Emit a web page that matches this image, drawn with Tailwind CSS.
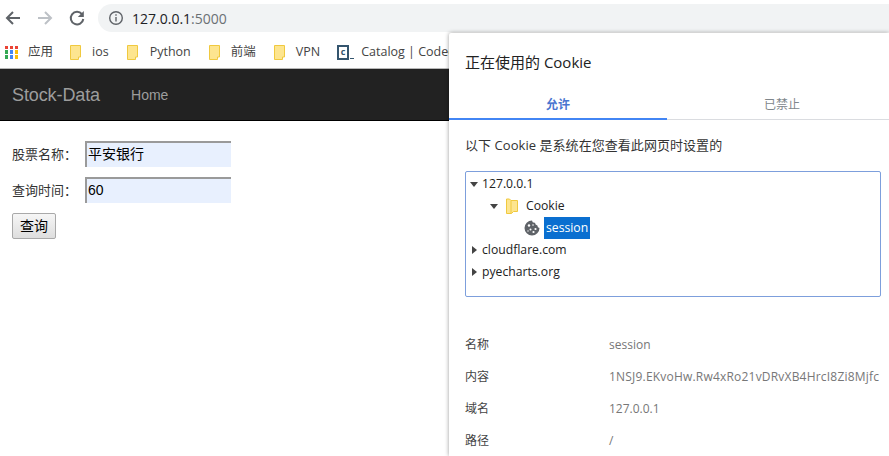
<!DOCTYPE html>
<html lang="zh">
<head>
    <meta charset="UTF-8">
    <title>Stock-Data</title>
    <script src="https://cdn.jsdelivr.net/npm/@tailwindcss/browser@4"></script>
</head>
<body class="bg-white w-[889px] h-[456px] overflow-hidden relative font-['Open_Sans','Noto_Sans_CJK_SC',sans-serif] text-[#333]">

    <!-- browser toolbar -->
    <div class="h-[36px] flex items-center pl-[3px]">
        <svg class="w-[18px] h-[18px] ml-[1px]" viewBox="0 0 18 18" fill="none" stroke="#5f6368" stroke-width="2"><path d="M16 9H3M9 3 3 9l6 6"/></svg>
        <svg class="w-[18px] h-[18px] ml-[14px]" viewBox="0 0 18 18" fill="none" stroke="#bdc1c6" stroke-width="2"><path d="M2 9h13M9 3l6 6-6 6"/></svg>
        <svg class="w-[18px] h-[18px] ml-[14px]" viewBox="0 0 18 18" fill="none" stroke="#5f6368" stroke-width="2"><path d="M14 5.2A6.3 6.3 0 1 0 15.3 10"/><path d="M15.8 2v6h-6" fill="#5f6368" stroke="none"/></svg>
        <div class="ml-[12px] flex-1 h-[28px] bg-[#f1f3f4] rounded-l-[14px] flex items-center pl-[10px]">
            <svg class="w-[16px] h-[16px]" viewBox="0 0 16 16" fill="none" stroke="#5f6368" stroke-width="1.4"><circle cx="8" cy="8" r="6.3"/><path d="M8 7v4.6M8 4.3v1.5"/></svg>
            <span class="ml-[8px] text-[14px] text-[#202124]">127.0.0.1<span class="text-[#6b7074]">:5000</span></span>
        </div>
    </div>

    <!-- bookmarks -->
    <div class="h-[33px] flex items-center pl-[5px] border-b border-[#b8b8b8] text-[12.5px] text-[#444] whitespace-nowrap">
        <div class="grid grid-cols-3 gap-[1.5px] w-[13px] h-[13px]">
            <i class="bg-[#ea4335]"></i><i class="bg-[#ea4335]"></i><i class="bg-[#ea4335]"></i>
            <i class="bg-[#34a853]"></i><i class="bg-[#4285f4]"></i><i class="bg-[#fbbc05]"></i>
            <i class="bg-[#34a853]"></i><i class="bg-[#4285f4]"></i><i class="bg-[#fbbc05]"></i>
        </div>
        <span class="ml-[10px]">应用</span>
        <svg class="w-[12px] h-[15px] ml-[17px]" viewBox="0 0 12 15"><path d="M.5.5h10v11.5h-2v2.5H.5z" fill="#fde58f" stroke="#f0c93f"/></svg>
        <span class="ml-[10px]">ios</span>
        <svg class="w-[12px] h-[15px] ml-[18px]" viewBox="0 0 12 15"><path d="M.5.5h10v11.5h-2v2.5H.5z" fill="#fde58f" stroke="#f0c93f"/></svg>
        <span class="ml-[11px]">Python</span>
        <svg class="w-[12px] h-[15px] ml-[18px]" viewBox="0 0 12 15"><path d="M.5.5h10v11.5h-2v2.5H.5z" fill="#fde58f" stroke="#f0c93f"/></svg>
        <span class="ml-[10px]">前端</span>
        <svg class="w-[12px] h-[15px] ml-[18px]" viewBox="0 0 12 15"><path d="M.5.5h10v11.5h-2v2.5H.5z" fill="#fde58f" stroke="#f0c93f"/></svg>
        <span class="ml-[10px]">VPN</span>
        <div class="ml-[17px] w-[12px] h-[15px] border-2 border-[#34556e] text-[9px] leading-[10px] text-center font-bold text-[#34556e]">c</div>
        <div class="w-[4px] h-[1px] bg-[#34556e] ml-[1px] mt-[12px]"></div>
        <span class="ml-[7px]">Catalog | Codecademy</span>
    </div>

    <!-- site navbar -->
    <div class="h-[52px] bg-[#222] border-b border-black flex items-center pl-[12px] pt-[2px] font-['Liberation_Sans',sans-serif] text-[#9d9d9d]">
        <span class="text-[18px] tracking-[-0.1px]">Stock-Data</span>
        <span class="ml-[31px] text-[14px]">Home</span>
    </div>

    <!-- query form -->
    <div class="pl-[12px] pt-[20px] text-[13px] font-['Liberation_Sans','Noto_Sans_CJK_SC',sans-serif]">
        <div class="flex items-center h-[26px]">
            <span class="w-[73px]">股票名称<span class="font-['Noto_Sans_CJK_TC']">：</span></span>
            <div class="w-[146px] h-[26px] bg-[#e8f0fe] border-2 border-r-0 border-b-0 border-[#9a9a9a] text-black text-[14px] leading-[22px] pl-[1px]">平安银行</div>
        </div>
        <div class="flex items-center h-[26px] mt-[10px]">
            <span class="w-[73px]">查询时间<span class="font-['Noto_Sans_CJK_TC']">：</span></span>
            <div class="w-[146px] h-[26px] bg-[#e8f0fe] border-2 border-r-0 border-b-0 border-[#9a9a9a] text-black text-[14px] leading-[22px] pl-[1px]">60</div>
        </div>
        <button class="mt-[10px] w-[44px] h-[26px] border border-[#a9a9a9] rounded-[2px] bg-gradient-to-b from-[#f6f6f6] to-[#dedede] text-[14px] text-black">查询</button>
    </div>

    <!-- cookie dialog -->
    <div class="absolute left-[449px] top-[33px] w-[440px] h-[423px] bg-white rounded-tl-[2px] shadow-[0_0_4px_rgba(0,0,0,0.4)] text-[#222]">
        <div class="pl-[16px] pt-[18px] text-[15px] leading-[22px]">正在使用的 Cookie</div>
        <div class="flex mt-[16px] h-[31px] text-[12px] border-b border-[#dadce0]">
            <div class="w-[218px] h-[31px] text-center leading-[31px] font-semibold text-[#4a76d0] border-b-2 border-[#4285f4]">允许</div>
            <div class="flex-1 pl-[8px] text-center leading-[31px] text-[#80868b]">已禁止</div>
        </div>
        <div class="pl-[16px] mt-[15px] text-[13px] tracking-[0.05px] leading-[20px] text-[#333]">以下 Cookie 是系统在您查看此网页时设置的</div>

        <div class="ml-[16px] mt-[16px] w-[416px] h-[126px] border border-[#7d9fdc] rounded-[2px] text-[12.2px] pt-[1px] text-[#222]">
            <div class="h-[22px] flex items-center pl-[4px]">
                <i class="border-x-[4px] border-x-transparent border-t-[5px] border-t-[#444]"></i>
                <span class="ml-[4px]">127.0.0.1</span>
            </div>
            <div class="h-[22px] flex items-center pl-[24px]">
                <i class="border-x-[4px] border-x-transparent border-t-[5px] border-t-[#444]"></i>
                <svg class="w-[12px] h-[16px] ml-[8px]" viewBox="0 0 12 16"><path d="M.5 1h3l1.5 1.5h6.5v11h-4l-2 2H.5z" fill="#fde58f" stroke="#f0c93f"/><path d="M5 2.5v13" stroke="#f0c93f" fill="none"/></svg>
                <span class="ml-[8px]">Cookie</span>
            </div>
            <div class="h-[22px] flex items-center pl-[58px]">
                <svg class="w-[16px] h-[16px]" viewBox="0 0 16 16"><path d="M8 .5a2.6 2.6 0 0 0 3 2.3 2.6 2.6 0 0 0 2.4 2.6A2.6 2.6 0 0 0 15.5 8 7.5 7.5 0 1 1 8 .5z" fill="#5f6368"/><g fill="#fff"><circle cx="5" cy="5.5" r="1.2"/><circle cx="9" cy="5" r=".8"/><circle cx="11.5" cy="9" r="1.1"/><circle cx="6.5" cy="9.5" r="1"/><circle cx="9.5" cy="12" r="1.1"/><circle cx="4" cy="11" r=".7"/></g></svg>
                <span class="ml-[4px] h-[22px] px-[2px] bg-[#0a6fd0] text-white leading-[22px]">session</span>
            </div>
            <div class="h-[22px] flex items-center pl-[6px]">
                <i class="border-y-[4px] border-y-transparent border-l-[5px] border-l-[#444]"></i>
                <span class="ml-[5px]">cloudflare.com</span>
            </div>
            <div class="h-[22px] flex items-center pl-[6px]">
                <i class="border-y-[4px] border-y-transparent border-l-[5px] border-l-[#444]"></i>
                <span class="ml-[5px]">pyecharts.org</span>
            </div>
        </div>

        <div class="mt-[32px] pl-[16px] text-[12px]">
            <div class="flex h-[32px] items-center"><span class="w-[144px] text-[#444]">名称</span><span class="text-[#777]">session</span></div>
            <div class="flex h-[32px] items-center"><span class="w-[144px] text-[#444]">内容</span><span class="text-[#777] tracking-[0.2px]">1NSJ9.EKvoHw.Rw4xRo21vDRvXB4HrcI8Zi8Mjfc</span></div>
            <div class="flex h-[32px] items-center"><span class="w-[144px] text-[#444]">域名</span><span class="text-[#777]">127.0.0.1</span></div>
            <div class="flex h-[32px] items-center"><span class="w-[144px] text-[#444]">路径</span><span class="text-[#777]">/</span></div>
        </div>
    </div>
</body>
</html>
